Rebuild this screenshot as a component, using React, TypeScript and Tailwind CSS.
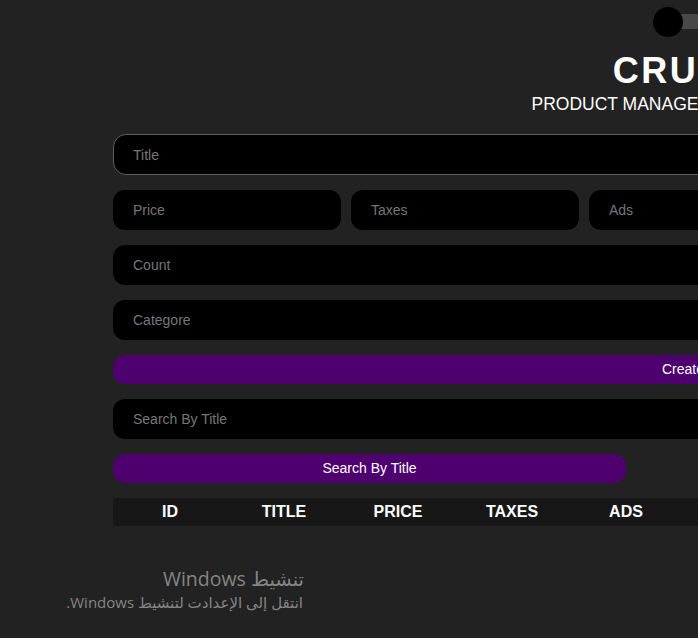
import React from "react";

const cols = ["ID", "TITLE", "PRICE", "TAXES", "ADS", "DISCOUNT", "TOTAL", "CATEGORY", "UPDATE", "DELETE"];

export default function App() {
  const inputBase =
    "bg-black text-white text-[14px] outline-none placeholder:text-[#767676] rounded-[12px]";
  return (
    <div
      className="relative w-screen h-screen overflow-hidden bg-[#222222] text-white"
      style={{ fontFamily: '"Liberation Sans", Arial, sans-serif' }}
    >
      <div className="ml-[113px] w-[1140px] flex flex-col">
        <div className="h-[44px] pt-[7px] pl-[540px]">
          <div className="relative w-[60px] h-[30px]">
            <div className="absolute left-[15px] top-[7px] h-[15px] w-[45px] bg-[#484848]" />
            <div className="absolute left-0 top-0 h-[30px] w-[30px] rounded-full bg-black" />
          </div>
        </div>
        <div className="text-center">
          <h1 className="mt-[6px] text-[36px] leading-[41px] font-bold tracking-[2.5px]">CRUDS</h1>
          <p className="mt-[3px] pr-[10px] text-[17.5px] leading-[20px]">PRODUCT MANAGEMENT SYSTEM</p>
        </div>

        <div className="mt-[20px] flex flex-col gap-[15px]">
          <input
            className={`${inputBase} pl-[19px] h-[41px] w-full border border-[#5e5e5e] rounded-[13px]`}
            placeholder="Title"
          />
          <div className="flex items-center gap-[10px]">
            <input className={`${inputBase} pl-[20px] h-[40px] w-[228px]`} placeholder="Price" />
            <input className={`${inputBase} pl-[20px] h-[40px] w-[228px]`} placeholder="Taxes" />
            <input className={`${inputBase} pl-[20px] h-[40px] w-[228px]`} placeholder="Ads" />
            <input className={`${inputBase} pl-[20px] h-[40px] w-[228px]`} placeholder="Discount" />
            <small className="px-[8px] py-[4px] rounded-[4px] bg-[#a00d02] text-[13px]">Total:</small>
          </div>
          <input className={`${inputBase} pl-[20px] h-[40px] w-full`} placeholder="Count" />
          <input className={`${inputBase} pl-[20px] h-[40px] w-full`} placeholder="Categore" />
          <button className="h-[29px] w-full rounded-[12px] bg-[#4e006f] text-[14px] text-white">
            Create
          </button>
          <input className={`${inputBase} pl-[20px] h-[40px] w-full`} placeholder="Search By Title" />
          <div className="flex justify-between">
            <button className="h-[29px] w-[513px] rounded-[12px] bg-[#4e006f] text-[14px] text-white">
              Search By Title
            </button>
            <button className="h-[29px] w-[513px] rounded-[12px] bg-[#4e006f] text-[14px] text-white">
              Search By Category
            </button>
          </div>
          <div className="grid grid-cols-10 h-[28px] items-center rounded-[4px] bg-[#171717]">
            {cols.map((c) => (
              <div key={c} className="text-center text-[16px] font-bold">
                {c}
              </div>
            ))}
          </div>
        </div>
      </div>

      <div
        className="absolute left-0 top-[565px] w-[304px] text-[#858585]"
        style={{ fontFamily: '"Open Sans", "DejaVu Sans", sans-serif' }}
      >
        <div dir="rtl" className="text-[19.5px] leading-[28px]">
          تنشيط Windows
        </div>
        <div dir="rtl" className="text-[15px] leading-[19px] pr-[1px]">
          انتقل إلى الإعدادت لتنشيط Windows.
        </div>
      </div>
    </div>
  );
}
